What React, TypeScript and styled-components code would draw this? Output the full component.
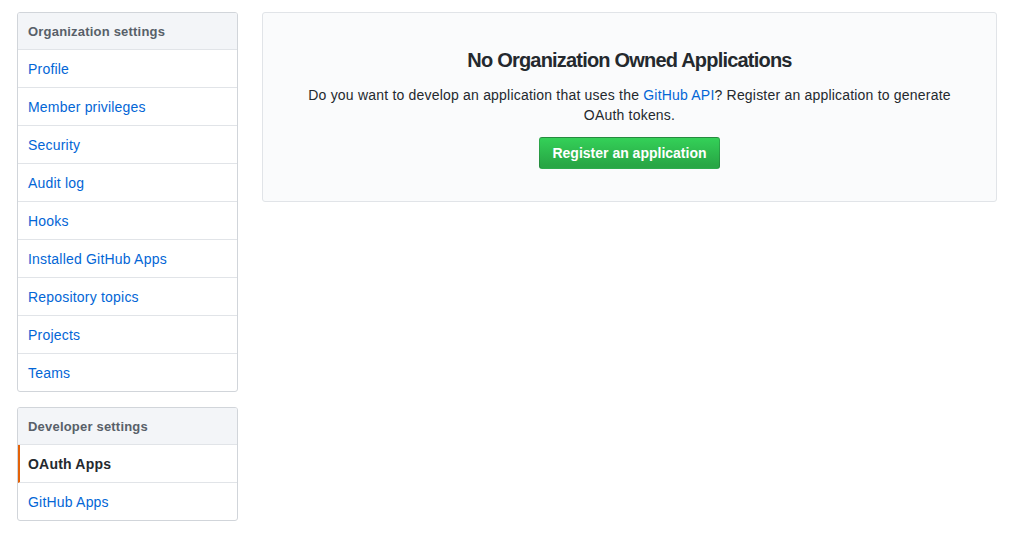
import React from "react";
import styled, { createGlobalStyle } from "styled-components";

const GlobalStyle = createGlobalStyle`
  body {
    margin: 0;
    background: #fff;
    font-family: "Liberation Sans", Arial, sans-serif;
    font-size: 14px;
    color: #24292e;
  }
`;

const Page = styled.div`
  display: flex;
  align-items: flex-start;
  gap: 24px;
  padding: 12px 16px 0 17px;
`;

const Sidebar = styled.div`
  width: 221px;
  flex: 0 0 221px;
  display: flex;
  flex-direction: column;
  gap: 15px;
`;

const Menu = styled.nav`
  border: 1px solid #d1d5da;
  border-radius: 3px;
  background: #fff;
  overflow: hidden;
`;

const MenuHeading = styled.div`
  height: 36px;
  display: flex;
  align-items: center;
  padding: 0 10px;
  background: #f3f5f8;
  border-bottom: 1px solid #e1e4e8;
  color: #586069;
  font-size: 13px;
  font-weight: bold;
  letter-spacing: 0.2px;
`;

const MenuItem = styled.a<{ $selected?: boolean }>`
  display: flex;
  align-items: center;
  height: 37px;
  padding: 0 10px 0 ${(p) => (p.$selected ? "8px" : "10px")};
  border-bottom: 1px solid #e1e4e8;
  border-left: ${(p) => (p.$selected ? "2px solid #e36209" : "none")};
  color: ${(p) => (p.$selected ? "#24292e" : "#0366d6")};
  font-weight: ${(p) => (p.$selected ? "bold" : "normal")};
  letter-spacing: 0.2px;
  text-decoration: none;
  cursor: pointer;

  &:last-child {
    border-bottom: none;
  }
`;

const Main = styled.div`
  flex: 1;
`;

const Blankslate = styled.div`
  background: #fafbfc;
  border: 1px solid #e1e4e8;
  border-radius: 3px;
  padding: 32px 32px 32px;
  text-align: center;
`;

const Title = styled.h3`
  margin: 0 0 10px;
  font-size: 20px;
  line-height: 30px;
  font-weight: bold;
  letter-spacing: -0.8px;
  color: #24292e;
`;

const Text = styled.p`
  margin: 0 auto 12px;
  max-width: 660px;
  line-height: 20px;
  letter-spacing: 0.2px;
  color: #24292e;

  a {
    color: #0366d6;
    text-decoration: none;
  }
`;

const GreenButton = styled.button`
  height: 32px;
  padding: 0 12px;
  border: 1px solid rgba(27, 31, 35, 0.2);
  border-radius: 3px;
  background-image: linear-gradient(-180deg, #34d058 0%, #28a745 90%);
  color: #fff;
  font-family: inherit;
  font-size: 14px;
  font-weight: bold;
  cursor: pointer;
`;

const orgItems = [
  "Profile",
  "Member privileges",
  "Security",
  "Audit log",
  "Hooks",
  "Installed GitHub Apps",
  "Repository topics",
  "Projects",
  "Teams",
];

export default function App(): React.ReactElement {
  return (
    <>
      <GlobalStyle />
      <Page>
        <Sidebar>
          <Menu>
            <MenuHeading>Organization settings</MenuHeading>
            {orgItems.map((item) => (
              <MenuItem key={item}>{item}</MenuItem>
            ))}
          </Menu>
          <Menu>
            <MenuHeading>Developer settings</MenuHeading>
            <MenuItem $selected>OAuth Apps</MenuItem>
            <MenuItem>GitHub Apps</MenuItem>
          </Menu>
        </Sidebar>
        <Main>
          <Blankslate>
            <Title>No Organization Owned Applications</Title>
            <Text>
              Do you want to develop an application that uses the{" "}
              <a href="#">GitHub API</a>? Register an application to generate
              OAuth tokens.
            </Text>
            <GreenButton type="button">Register an application</GreenButton>
          </Blankslate>
        </Main>
      </Page>
    </>
  );
}
